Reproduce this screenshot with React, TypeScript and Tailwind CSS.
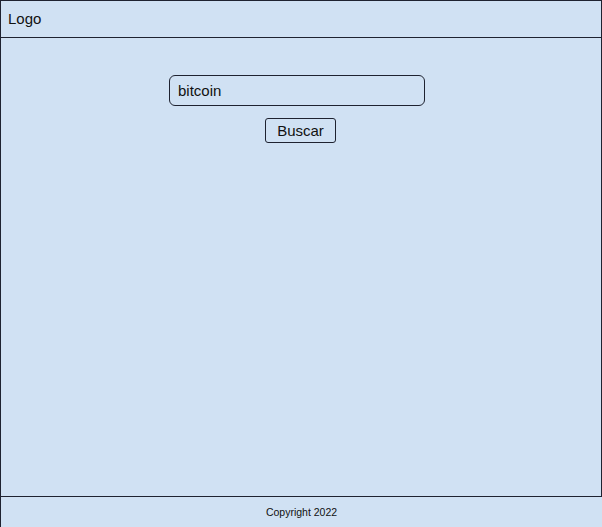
export default function App() {
  return (
    <div className="w-[602px] h-[527px] bg-[#d0e1f3] flex flex-col font-['Liberation_Sans',Arial,sans-serif] text-[#111]">
      <header className="h-[38px] shrink-0 border border-[#1e2230] flex items-center pl-[7px] pt-[1px] text-[15px]">
        Logo
      </header>
      <main className="h-[459px] shrink-0 border-l border-r border-b border-[#1e2230] flex flex-col">
        <div className="mt-[37px] ml-[168px] w-[256px] h-[31px] border border-[#1e2230] rounded-[6px] flex items-center pl-[8px] pt-[1px] text-[15px]">
          bitcoin
        </div>
        <div className="mt-[12px] ml-[264px] w-[71px] h-[25px] border border-[#1e2230] rounded-[3px] flex items-center justify-center pt-[1px] text-[15px]">
          Buscar
        </div>
      </main>
      <footer className="flex-1 border-l border-[#1e2230] flex items-center justify-center text-[10.5px] pt-[1px]">
        Copyright 2022
      </footer>
    </div>
  );
}
